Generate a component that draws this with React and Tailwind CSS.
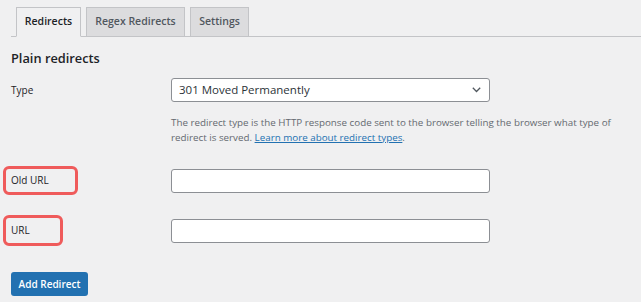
import React from "react";

export default function App() {
  return (
    <div
      className="w-[641px] h-[302px] bg-[#f0f0f1] overflow-hidden text-[#1d2327]"
      style={{ fontFamily: '"Open Sans", "Liberation Sans", sans-serif' }}
    >
      {/* Tabs */}
      <div className="pt-[7px] pl-[11px]">
        <div className="flex items-end border-b border-[#c3c4c7] h-[30px] pl-[5px] gap-[5px]">
          <div className="h-[30px] w-[65px] -mb-px border border-[#c3c4c7] border-b-[#f0f0f1] bg-[#f0f0f1] flex items-center justify-center text-[10.5px] font-semibold text-[#1d2327]">
            Redirects
          </div>
          <div className="h-[29px] w-[99px] border border-[#c3c4c7] border-b-0 bg-[#dcdcde] flex items-center justify-center text-[10.5px] font-semibold text-[#50575e]">
            Regex Redirects
          </div>
          <div className="h-[29px] w-[59px] border border-[#c3c4c7] border-b-0 bg-[#dcdcde] flex items-center justify-center text-[10.5px] font-semibold text-[#50575e]">
            Settings
          </div>
        </div>
      </div>

      {/* Heading */}
      <div className="pl-[11px] mt-[12px] h-[20px] flex items-center text-[12.8px] font-semibold text-[#1d2327]">
        Plain redirects
      </div>

      {/* Type row */}
      <div className="flex mt-[9px] h-[24px] items-center">
        <div className="w-[171px] pl-[11px] text-[10px] text-[#1d2327]">Type</div>
        <div className="relative w-[319px] h-[24px] bg-white border border-[#8c8f94] rounded-[3px] flex items-center pl-[7px] text-[11.5px] text-[#2c3338]">
          301 Moved Permanently
          <svg
            className="absolute right-[8px] top-[8px]"
            width="9"
            height="6"
            viewBox="0 0 9 6"
            fill="none"
          >
            <path d="M0.8 0.8 L4.5 4.5 L8.2 0.8" stroke="#50575e" strokeWidth="1.3" />
          </svg>
        </div>
      </div>

      {/* Description */}
      <div className="ml-[171px] mt-[13px] text-[9.8px] leading-[15px] text-[#646970]">
        The redirect type is the HTTP response code sent to the browser telling the browser what type of
        <br />
        redirect is served.{" "}
        <span className="text-[#2271b1] underline">Learn more about redirect types</span>.
      </div>

      {/* Old URL row */}
      <div className="flex mt-[21px] h-[29px] items-center">
        <div className="w-[171px] pl-[3px]">
          <div className="w-[75px] h-[29px] border-[3px] border-[#ef5b5b] rounded-[6px] flex items-center pl-[5px] text-[10px] text-[#1d2327]">
            Old URL
          </div>
        </div>
        <div className="w-[319px] h-[24px] bg-white border border-[#8c8f94] rounded-[3px]" />
      </div>

      {/* URL row */}
      <div className="flex mt-[20px] h-[31px] items-center">
        <div className="w-[171px] pl-[3px]">
          <div className="w-[60px] h-[31px] border-[3px] border-[#ef5b5b] rounded-[6px] flex items-center pl-[5px] text-[10px] text-[#1d2327]">
            URL
          </div>
        </div>
        <div className="w-[319px] h-[24px] bg-white border border-[#8c8f94] rounded-[3px]" />
      </div>

      {/* Button */}
      <div className="pl-[11px] mt-[26px]">
        <div className="w-[77px] h-[24px] bg-[#2271b1] rounded-[3px] flex items-center justify-center text-white text-[10px] font-semibold">
          Add Redirect
        </div>
      </div>
    </div>
  );
}
